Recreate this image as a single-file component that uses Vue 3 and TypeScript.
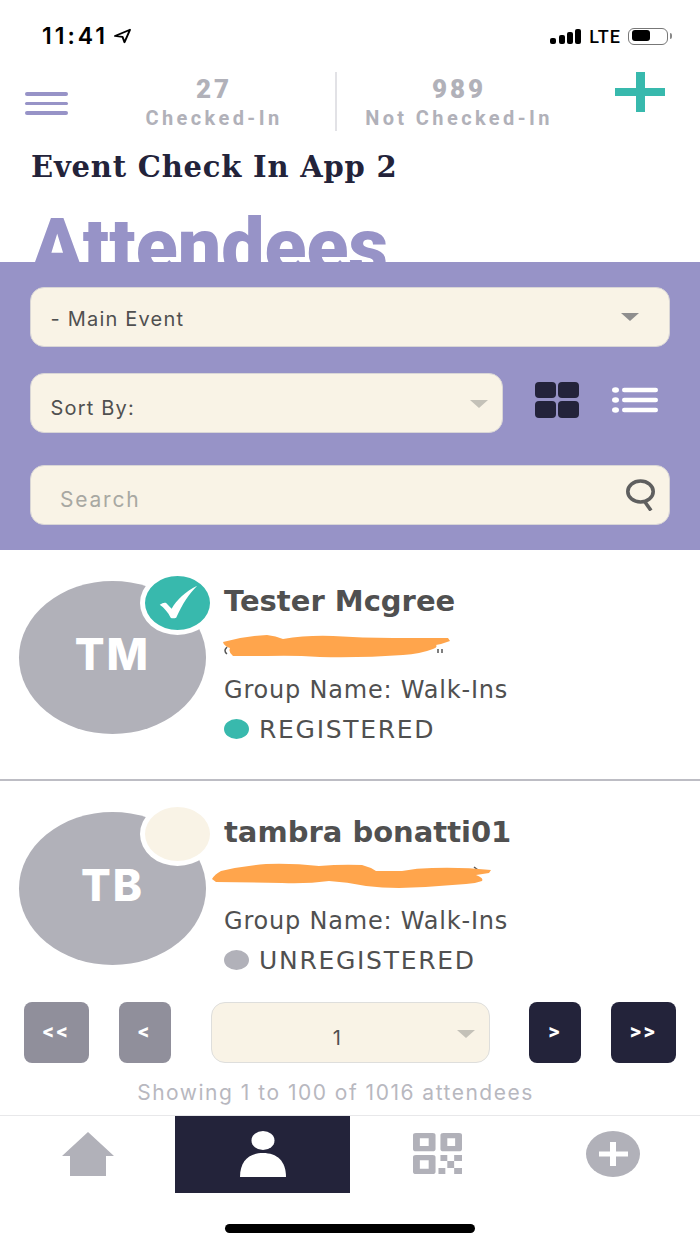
<template>
  <div class="screen">
    <div class="status-bar">
      <div class="time">
        <span>11:41</span>
        <svg width="19" height="16" viewBox="0 0 19 19" preserveAspectRatio="none"><path d="M17 2 2 9.500l7.500 1L11.500 17z" fill="none" stroke="#000" stroke-width="2" stroke-linejoin="round" /></svg>
      </div>
      <div class="status-right">
        <div class="signal"><i v-for="h in [6, 9, 12, 15]" :key="h" :style="{ height: h + 'px' }"></i></div>
        <span class="lte">LTE</span>
        <div class="battery"><b></b></div>
        <div class="battery-tip"></div>
      </div>
    </div>

    <header class="top">
      <div class="burger"><i></i><i></i><i></i></div>
      <div class="counts">
        <div class="count first">
          <strong>27</strong>
          <span>Checked-In</span>
        </div>
        <div class="count second">
          <strong>989</strong>
          <span>Not Checked-In</span>
        </div>
      </div>
      <svg class="plus" width="50" height="40" viewBox="0 0 50 40"><path d="M21 0h9v16h20v8H30v16h-9V24H0v-8h21z" fill="#38b9ad" /></svg>
    </header>

    <h2 class="app-name">Event Check In App 2</h2>
    <h1 class="page-title">Attendees</h1>

    <section class="filters">
      <div class="select wide">
        <span>- Main Event</span>
        <i class="caret dark"></i>
      </div>
      <div class="sort-row">
        <div class="select sort">
          <span>Sort By:</span>
          <i class="caret"></i>
        </div>
        <div class="grid-icon"><i></i><i></i><i></i><i></i></div>
        <svg class="list-icon" width="46" height="26" viewBox="0 0 46 26">
          <g fill="#fff">
            <ellipse cx="3.500" cy="3" rx="3.500" ry="2.800" /><ellipse cx="3.500" cy="13" rx="3.500" ry="2.800" /><ellipse cx="3.500" cy="23" rx="3.500" ry="2.800" />
            <rect x="10" y="0.800" width="36" height="4.400" rx="2.200" /><rect x="10" y="10.800" width="36" height="4.400" rx="2.200" /><rect x="10" y="20.800" width="36" height="4.400" rx="2.200" />
          </g>
        </svg>
      </div>
      <div class="select search">
        <span>Search</span>
        <svg width="29" height="32" viewBox="0 0 29 32"><ellipse cx="14.500" cy="12.500" rx="12.700" ry="10.500" fill="none" stroke="#5f5f5f" stroke-width="3.600" /><path d="M19 23l6 8.500" stroke="#5f5f5f" stroke-width="3.600" fill="none" /></svg>
      </div>
    </section>

    <section class="list">
      <article v-for="a in attendees" :key="a.initials" class="card" :class="{ lined: a.registered }">
        <div class="avatar">
          {{ a.initials }}
          <div class="badge" :class="{ on: a.registered }">
            <svg v-if="a.registered" width="42" height="36" viewBox="0 0 46 44" preserveAspectRatio="none"><path d="M3 24c3-2 5-3 7-2l6 7C22 18 31 8 44 1c-9 10-16 22-23 39-2 1-5 1-6 0-3-7-7-12-12-16z" fill="#fff" /></svg>
          </div>
        </div>
        <div class="info">
          <h3>{{ a.name }}</h3>
          <div class="email" :class="{ shifted: !a.registered }">
            <svg width="282" height="26" viewBox="0 0 282 26">
              <path :d="a.remnants" fill="none" stroke="#555" stroke-width="1.500" />
              <path :d="a.scribble" fill="#ffa54c" />
            </svg>
          </div>
          <p>Group Name: Walk-Ins</p>
          <div class="state">
            <i :class="{ on: a.registered }"></i>
            <span>{{ a.registered ? 'REGISTERED' : 'UNREGISTERED' }}</span>
          </div>
        </div>
      </article>
    </section>

    <nav class="pager">
      <button class="gray long">&lt;&lt;</button>
      <button class="gray">&lt;</button>
      <div class="select page">
        <span>1</span>
        <i class="caret"></i>
      </div>
      <button class="dark">&gt;</button>
      <button class="dark long">&gt;&gt;</button>
    </nav>
    <p class="showing">Showing 1 to 100 of 1016 attendees</p>

    <footer class="tabs">
      <div class="tab">
        <svg class="home" width="52" height="44" viewBox="0 0 52 44"><path d="M26 0l26 24H44v20H8V24H0z" fill="#b1b1b9" /></svg>
      </div>
      <div class="tab active">
        <svg width="48" height="46" viewBox="0 0 48 46"><ellipse cx="24" cy="9.500" rx="11.500" ry="9.500" fill="#fff" /><path d="M1 46C1 30 10 22 24 22s23 8 23 24z" fill="#fff" /></svg>
      </div>
      <div class="tab">
        <svg class="qr" width="49" height="41" viewBox="0 0 50 54" preserveAspectRatio="none" fill="#b1b1b9" fill-rule="evenodd">
          <path d="M3 0h17a3 3 0 0 1 3 3v18a3 3 0 0 1-3 3H3a3 3 0 0 1-3-3V3a3 3 0 0 1 3-3zm4 7v10h9V7zM31 0h16a3 3 0 0 1 3 3v18a3 3 0 0 1-3 3H31a3 3 0 0 1-3-3V3a3 3 0 0 1 3-3zm4 7v10h8V7zM3 29h17a3 3 0 0 1 3 3v19a3 3 0 0 1-3 3H3a3 3 0 0 1-3-3V32a3 3 0 0 1 3-3zm4 7v11h9V36z" />
          <path d="M28 29h7v8h-7zM42 29h8v8h-8zM35 37h7v9h-7zM26 46h7v8h-7zM42 46h8v8h-8z" />
        </svg>
      </div>
      <div class="tab">
        <svg width="54" height="46" viewBox="0 0 54 46"><ellipse cx="27" cy="23" rx="27" ry="23" fill="#b1b1b9" /><path d="M24 11h6v9.500h12v5H30V35h-6v-9.500H13v-5h11z" fill="#fff" /></svg>
      </div>
    </footer>
    <div class="home-bar"></div>
  </div>
</template>

<script setup lang="ts">
interface Attendee {
  initials: string
  name: string
  registered: boolean
  scribble: string
  remnants: string
}

const attendees: Attendee[] = [
  {
    initials: 'TM',
    name: 'Tester Mcgree',
    registered: true,
    scribble: 'M1 7Q22 1 45 0Q54 1 61 4Q85 0 111 1Q140 3 171 3L226 3L228 6Q220 9 214 10Q216 12 211 14Q198 19 181 20Q140 23 98 22Q70 20 45 21L11 21Q6 17 8 13Q2 11 1 7z',
    remnants: 'M5 12Q1 16 5 19M216 14v4M220 14v4'
  },
  {
    initials: 'TB',
    name: 'tambra bonatti01',
    registered: false,
    scribble: 'M0 16Q3 11 9 8Q30 3 54 1Q80 0 107 3Q130 1 150 2Q158 4 164 8L190 8Q205 5 220 5Q250 4 279 7L277 10L264 12Q272 15 270 18Q262 21 254 21Q220 24 187 25Q170 25 154 23Q135 19 117 18Q95 21 70 20L4 19z',
    remnants: 'M262 4l4 3'
  }
]
</script>

<style>
body {
  margin: 0;
  background: #fff;
}
</style>

<style scoped>
.screen {
  width: 700px;
  height: 1244px;
  position: relative;
  overflow: hidden;
  background: #fff;
  font-family: Inter, Roboto, "Liberation Sans", sans-serif;
  color: #505050;
}

.status-bar {
  height: 62px;
  padding: 10px 28px 0 42px;
  box-sizing: border-box;
  display: flex;
  justify-content: space-between;
  align-items: center;
}

.time {
  display: flex;
  align-items: center;
  gap: 5px;
  font: 600 23px Inter, sans-serif;
  letter-spacing: 3px;
  color: #000;
}

.status-right {
  display: flex;
  align-items: center;
  color: #000;
}

.signal {
  display: flex;
  align-items: flex-end;
  gap: 2.300px;
  margin-right: 8px;
}

.signal i {
  width: 6px;
  background: #000;
  border-radius: 2px;
}

.lte {
  font: 500 18px Roboto, sans-serif;
  letter-spacing: 1px;
  margin-right: 7px;
}

.battery {
  width: 40px;
  height: 17px;
  border: 1.500px solid #777;
  border-radius: 6px;
  padding: 1.500px 3px;
  box-sizing: border-box;
}

.battery b {
  display: block;
  width: 18px;
  height: 11px;
  background: #000;
  border-radius: 3px;
}

.battery-tip {
  width: 2px;
  height: 6px;
  margin-left: 2px;
  background: #888;
  border-radius: 0 2px 2px 0;
}

.top {
  height: 70px;
  display: flex;
  padding: 10px 35px 0 25px;
  box-sizing: border-box;
}

.burger {
  width: 43px;
  margin-top: 20px;
  display: flex;
  flex-direction: column;
  gap: 6px;
}

.burger i {
  height: 3.500px;
  border-radius: 2px;
  background: #9793c7;
}

.counts {
  display: flex;
  flex: 1;
}

.count {
  display: flex;
  flex-direction: column;
  align-items: center;
  color: #b1b1b9;
  font-family: Roboto, sans-serif;
  font-weight: 700;
  white-space: nowrap;
}

.count strong {
  font-size: 26px;
  line-height: 34px;
  letter-spacing: 3px;
}

.count span {
  font-size: 20px;
  line-height: 24px;
  letter-spacing: 3.400px;
}

.count.first {
  width: 269px;
  height: 59px;
  padding-left: 25px;
  border-right: 2px solid #e2e2e6;
  box-sizing: border-box;
}

.count.second {
  width: 244px;
}

.plus {
  margin: 0 0 0 -5px;
}

.app-name {
  margin: 16px 0 0 31px;
  height: 38px;
  font: 700 29px/38px "DejaVu Serif", serif;
  letter-spacing: 0.800px;
  color: #23233a;
}

.page-title {
  margin: 0 0 0 31px;
  height: 76px;
  font: 900 77px/122px Roboto, sans-serif;
  color: #9793c7;
}

.filters {
  position: relative;
  height: 288px;
  padding: 25px 30px 0;
  box-sizing: border-box;
  background: #9793c7;
}

.select {
  display: flex;
  align-items: center;
  justify-content: space-between;
  box-sizing: border-box;
  height: 60px;
  padding: 0 30px 0 19.500px;
  background: #f9f3e6;
  border: 1.500px solid #d9d6d6;
  border-radius: 14px;
  font-size: 20px;
  letter-spacing: 1.200px;
  color: #505050;
}

.wide {
  padding-top: 3px;
}

.wide .caret {
  margin-top: -3px;
}

.caret {
  width: 0;
  height: 0;
  border-left: 9px solid transparent;
  border-right: 9px solid transparent;
  border-top: 8px solid #c4c1b8;
}

.caret.dark {
  border-top-color: #8f8e8e;
}

.sort-row {
  display: flex;
  align-items: center;
  margin-top: 26px;
}

.select.sort {
  width: 473px;
  padding: 10px 14px 0 19.500px;
}

.select.sort .caret {
  margin-top: -8px;
}

.grid-icon {
  width: 44px;
  height: 36px;
  margin: -7px 33px 0 32px;
  display: grid;
  grid-template-columns: 1fr 1fr;
  gap: 3px 2px;
}

.grid-icon i {
  background: #23233a;
  border-radius: 4px;
}

.list-icon {
  margin-top: -6px;
}

.select.search {
  margin-top: 32px;
  padding: 8px 14px 0 29px;
  color: #a8a8a2;
  font-size: 21px;
  letter-spacing: 1.800px;
}

.search svg {
  margin-top: -8px;
}

.list {
  height: 452px;
}

.card {
  height: 231px;
  box-sizing: border-box;
  display: flex;
  padding: 31px 0 0 19px;
}

.card.lined {
  border-bottom: 2px solid #bdbdc4;
}

.avatar {
  position: relative;
  width: 187px;
  height: 153px;
  border-radius: 50%;
  background: #b1b1b9;
  color: #fff;
  font: 800 44px/147px Inter, sans-serif;
  letter-spacing: 2px;
  text-align: center;
  flex-shrink: 0;
}

.badge {
  position: absolute;
  top: -10px;
  right: -9px;
  width: 65px;
  height: 54px;
  border: 5px solid #fff;
  border-radius: 50%;
  background: #f9f3e6;
  display: flex;
  align-items: center;
  justify-content: center;
}

.badge.on {
  background: #38b9ad;
}

.info {
  margin: 0 0 0 18px;
}

.info h3 {
  margin: 0;
  font: 700 29px/40px "DejaVu Sans", sans-serif;
  color: #505050;
  white-space: nowrap;
}

.email {
  height: 26px;
  margin: 14px 0 0 -2px;
}

.email.shifted {
  height: 29px;
  margin: 11px 0 0 -12px;
}

.info p {
  margin: 14px 0 0;
  font: 400 24px/30px "DejaVu Sans", sans-serif;
  letter-spacing: 0.800px;
  color: #505050;
  white-space: nowrap;
}

.state {
  display: flex;
  align-items: center;
  margin-top: 10px;
  font: 400 25px/30px "DejaVu Sans", sans-serif;
  letter-spacing: 1.700px;
}

.state i {
  width: 25px;
  height: 20px;
  margin: -3px 10px 0 0;
  border-radius: 50%;
  background: #b1b1b9;
}

.state i.on {
  background: #38b9ad;
}

.pager {
  display: flex;
  height: 61px;
  padding: 0 24px;
  align-items: stretch;
}

.pager button {
  width: 52px;
  border: none;
  border-radius: 8px;
  color: #fff;
  font: 700 22px Roboto, sans-serif;
  letter-spacing: 2.500px;
  padding: 0 0 2px;
}

.pager button.long {
  width: 65px;
}

.pager button.gray {
  background: #908f9b;
  margin-right: 30px;
}

.pager button.gray + .select {
  margin-left: 10px;
}

.pager button.dark {
  background: #23233a;
  margin-left: 30px;
}

.pager button.dark:nth-child(4) {
  margin-left: 39px;
}

.select.page {
  width: 280px;
  height: 61px;
  padding: 10px 14px 0 0;
  border-color: #dededc;
  position: relative;
  justify-content: flex-end;
}

.page span {
  position: absolute;
  left: 121px;
}

.page .caret {
  margin-top: -8px;
}

.showing {
  margin: 15px 0 0;
  height: 37px;
  padding-right: 29px;
  text-align: center;
  font-size: 21px;
  line-height: 30px;
  letter-spacing: 1.500px;
  color: #b8b8bf;
}

.tabs {
  display: flex;
  height: 77px;
  border-top: 1px solid #e8e8ea;
  box-sizing: content-box;
}

.tab {
  width: 175px;
  display: flex;
  justify-content: center;
  align-items: flex-start;
  padding-top: 15px;
  box-sizing: border-box;
}

.home {
  margin: 1px 0 0 1px;
}

.qr {
  margin: 2px 0 0 -1px;
}

.tab.active {
  background: #23233a;
}

.home-bar {
  width: 250px;
  height: 9px;
  margin: 31px auto 0;
  background: #000;
  border-radius: 5px;
}
</style>
